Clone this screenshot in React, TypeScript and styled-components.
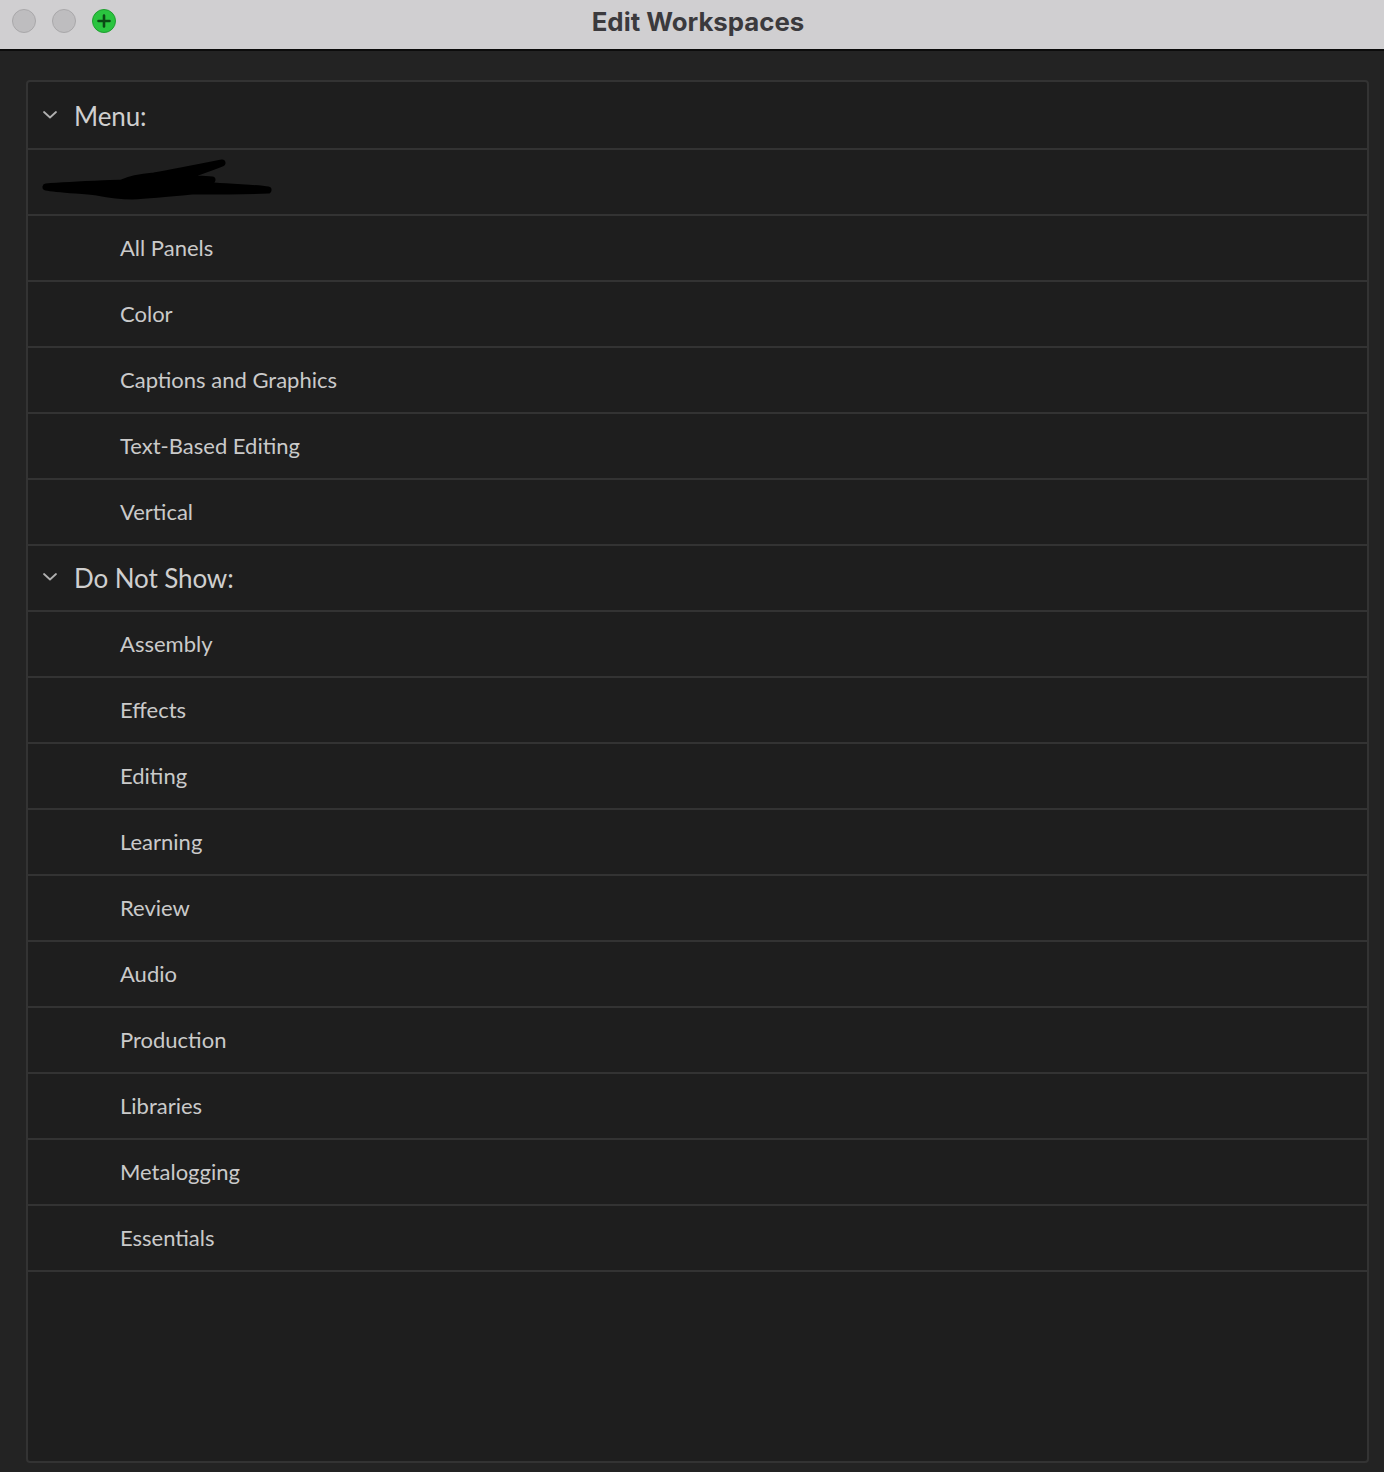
import React from "react";
import styled, { createGlobalStyle } from "styled-components";

const Global = createGlobalStyle`
  html, body { margin: 0; padding: 0; background: #232323; }
  body { font-family: "Lato", "Noto Sans", sans-serif; }
  * { box-sizing: border-box; }
`;

const Window = styled.div`
  width: 1384px;
  height: 1472px;
  background: #232323;
  display: flex;
  flex-direction: column;
  overflow: hidden;
`;

const TitleBar = styled.div`
  height: 51px;
  flex: none;
  background: #d0cfd1;
  border-bottom: 2px solid #0c0c0c;
  position: relative;
  display: flex;
  align-items: center;
  justify-content: center;
`;

const Lights = styled.div`
  position: absolute;
  left: 12px;
  top: 9px;
  display: flex;
  gap: 16px;
`;

const Light = styled.div<{ $green?: boolean }>`
  width: 24px;
  height: 24px;
  border-radius: 50%;
  background: ${(p) => (p.$green ? "#2ac43f" : "#bebdbf")};
  border: 1px solid ${(p) => (p.$green ? "#1f9e30" : "#a9a8aa")};
  display: flex;
  align-items: center;
  justify-content: center;
`;

const Title = styled.div`
  font-family: "Inter", "Liberation Sans", sans-serif;
  font-weight: 700;
  font-size: 25.8px;
  color: #3b3a3d;
  margin-left: 12px;
  margin-top: -7px;
`;

const Body = styled.div`
  flex: 1;
  padding: 29px 15px 9px 26px;
  display: flex;
`;

const Panel = styled.div`
  flex: 1;
  background: #1e1e1e;
  border: 2px solid #333333;
  border-radius: 4px;
  padding-top: 2px;
  display: flex;
  flex-direction: column;
`;

const Row = styled.div<{ $indent: number }>`
  height: 66px;
  flex: none;
  border-bottom: 2px solid #333333;
  display: flex;
  align-items: center;
  padding-left: ${(p) => p.$indent}px;
`;

const HeaderText = styled.span`
  font-size: 26px;
  color: #cfcfcf;
  margin-left: 16px;
  margin-top: 0;
  letter-spacing: -0.1px;
`;

const ItemText = styled.span`
  font-size: 22px;
  color: #cacaca;
  margin-top: -2px;
`;

const Chevron = () => (
  <svg width="16" height="10" viewBox="0 0 16 10" style={{ marginTop: -2 }}>
    <path d="M2 2 L8 7.5 L14 2" fill="none" stroke="#b0b0b0" strokeWidth="1.8" strokeLinecap="round" strokeLinejoin="round" />
  </svg>
);

const Plus = () => (
  <svg width="16" height="16" viewBox="0 0 16 16">
    <path d="M8 2.5 V13.5 M2.5 8 H13.5" stroke="#0b4a14" strokeWidth="2.6" strokeLinecap="round" />
  </svg>
);

const Scribble = () => (
  <svg width="240" height="50" viewBox="0 0 240 50" style={{ marginLeft: -26, marginTop: 0 }}>
    <path
      d="M4 30 C30 28 60 27 80 26 C88 22 100 20 112 19 C135 15 160 10 180 6 C160 14 145 18 140 21 C150 22 160 22 170 23 C162 26 160 28 172 29 C195 31 215 31 226 33 C200 34 170 34 150 34 C130 36 110 38 90 39 C75 39 65 37 55 35 C35 33 15 32 4 30 Z"
      fill="#000"
      stroke="#000"
      strokeWidth="7"
      strokeLinejoin="round"
    />
  </svg>
);

const menuItems = ["All Panels", "Color", "Captions and Graphics", "Text-Based Editing", "Vertical"];
const hiddenItems = [
  "Assembly",
  "Effects",
  "Editing",
  "Learning",
  "Review",
  "Audio",
  "Production",
  "Libraries",
  "Metalogging",
  "Essentials",
];

export default function App() {
  return (
    <Window>
      <Global />
      <TitleBar>
        <Lights>
          <Light />
          <Light />
          <Light $green>
            <Plus />
          </Light>
        </Lights>
        <Title>Edit Workspaces</Title>
      </TitleBar>
      <Body>
        <Panel>
          <Row $indent={14}>
            <Chevron />
            <HeaderText>Menu:</HeaderText>
          </Row>
          <Row $indent={40}>
            <Scribble />
          </Row>
          {menuItems.map((t) => (
            <Row key={t} $indent={92}>
              <ItemText>{t}</ItemText>
            </Row>
          ))}
          <Row $indent={14}>
            <Chevron />
            <HeaderText>Do Not Show:</HeaderText>
          </Row>
          {hiddenItems.map((t) => (
            <Row key={t} $indent={92}>
              <ItemText>{t}</ItemText>
            </Row>
          ))}
        </Panel>
      </Body>
    </Window>
  );
}
